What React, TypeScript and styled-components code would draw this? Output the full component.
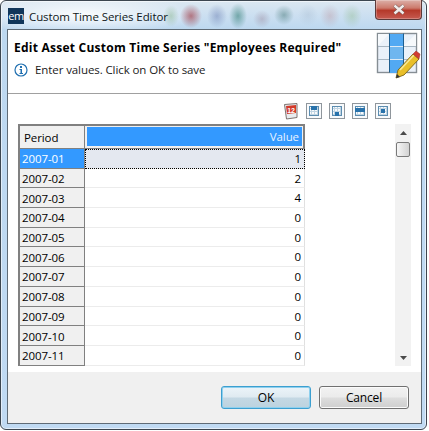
import styled, { createGlobalStyle } from 'styled-components';

const periods = [
  ['2007-01', '1'],
  ['2007-02', '2'],
  ['2007-03', '4'],
  ['2007-04', '0'],
  ['2007-05', '0'],
  ['2007-06', '0'],
  ['2007-07', '0'],
  ['2007-08', '0'],
  ['2007-09', '0'],
  ['2007-10', '0'],
  ['2007-11', '0'],
];

const GlobalStyle = createGlobalStyle`
  html, body {
    margin: 0;
    padding: 0;
    background: #ffffff;
    overflow: hidden;
  }
  body {
    font-family: 'Open Sans', 'Noto Sans', sans-serif;
    font-size: 11.5px;
    letter-spacing: -0.09px;
    color: #000000;
  }
`;

const Frame = styled.div`
  width: 427px;
  height: 430px;
  box-sizing: border-box;
  display: flex;
  flex-direction: column;
  padding: 0 4px 5px 6px;
  border: 1px solid #3c4650;
  border-radius: 6px;
  box-shadow: inset 0 0 0 1px rgba(255, 255, 255, 0.55);
  background:
    radial-gradient(ellipse 8px 11px at 170px 15px, rgba(120, 170, 120, 0.4), transparent),
    radial-gradient(ellipse 11px 12px at 190px 15px, rgba(160, 60, 70, 0.65), transparent),
    radial-gradient(ellipse 10px 12px at 216px 15px, rgba(110, 130, 180, 0.5), transparent),
    radial-gradient(ellipse 9px 13px at 237px 15px, rgba(40, 120, 110, 0.55), transparent),
    radial-gradient(ellipse 9px 9px at 261px 18px, rgba(150, 130, 150, 0.4), transparent),
    radial-gradient(ellipse 10px 10px at 283px 14px, rgba(70, 120, 120, 0.5), transparent),
    radial-gradient(ellipse 10px 11px at 307px 14px, rgba(170, 190, 210, 0.4), transparent),
    radial-gradient(ellipse 10px 12px at 329px 15px, rgba(190, 160, 170, 0.45), transparent),
    radial-gradient(ellipse 10px 12px at 351px 15px, rgba(150, 190, 150, 0.45), transparent),
    radial-gradient(ellipse 120px 20px at 80px 14px, rgba(255, 255, 255, 0.9), transparent),
    linear-gradient(180deg, #dbe7f1 0, #bdd8f0 28px, #c0daf3 100%);
`;

const TitleBar = styled.div`
  height: 28px;
  display: flex;
  align-items: center;
  gap: 5px;
  padding: 2px 0 0 1px;
  box-sizing: border-box;
  flex-shrink: 0;
  position: relative;
`;

const AppBadge = styled.div`
  width: 16px;
  height: 16px;
  background: #10365a;
  color: #ffffff;
  font-size: 11px;
  line-height: 15px;
  text-align: center;
  letter-spacing: -0.5px;
`;

const TitleText = styled.span`
  font-size: 11.5px;
  color: #101820;
`;

const CloseButton = styled.div`
  position: absolute;
  top: -1px;
  right: 0;
  width: 47px;
  height: 20px;
  box-sizing: border-box;
  border: 1px solid #5c3a3a;
  border-top: none;
  border-radius: 0 0 4px 4px;
  background: linear-gradient(180deg, #dcb0a8 0, #cc7a6c 42%, #b5392a 55%, #c65a50 100%);
  box-shadow: inset 0 0 0 1px rgba(255, 255, 255, 0.25);
  display: flex;
  align-items: center;
  justify-content: center;
`;

const Client = styled.div`
  flex: 1;
  display: flex;
  flex-direction: column;
  border: 1px solid #5f6b76;
  background: #ffffff;
  min-height: 0;
`;

const Header = styled.div`
  height: 64px;
  flex-shrink: 0;
  box-sizing: border-box;
  border-bottom: 1px solid #a0a0a0;
  padding: 8px 0 0 6px;
  display: flex;
  position: relative;
`;

const HeaderText = styled.div`
  display: flex;
  flex-direction: column;
  gap: 5px;
`;

const Heading = styled.div`
  font-weight: 700;
  font-size: 12px;
  letter-spacing: 0.24px;
  line-height: 19px;
  color: #000000;
`;

const Hint = styled.div`
  display: flex;
  align-items: center;
  gap: 7px;
  line-height: 16px;
  color: #1a1a1a;
`;

const HeaderArt = styled.svg`
  position: absolute;
  right: 0;
  top: 2px;
`;

const Content = styled.div`
  flex: 1;
  min-height: 0;
  display: flex;
  flex-direction: column;
  padding: 6px 10px 0 10px;
`;

const Toolbar = styled.div`
  height: 24px;
  box-sizing: border-box;
  padding-top: 3px;
  display: flex;
  justify-content: flex-end;
  align-items: flex-start;
  gap: 7px;
  margin-right: 20px;
`;

const TableArea = styled.div`
  flex: 1;
  min-height: 0;
  display: flex;
  justify-content: space-between;
`;

const Grid = styled.div`
  width: 287px;
  height: 242px;
  overflow: hidden;
  border-left: 2px solid #808080;
  border-top: 2px solid #808080;
  box-sizing: border-box;
`;

const GridRow = styled.div<{ $head?: boolean }>`
  display: flex;
  height: ${(p) => (p.$head ? '23px' : '19.7px')};
  box-sizing: border-box;
`;

const PeriodCell = styled.div<{ $head?: boolean; $selected?: boolean }>`
  width: 65px;
  flex-shrink: 0;
  box-sizing: border-box;
  padding: 1px 0 0 ${(p) => (p.$head ? '4px' : '2px')};
  display: flex;
  align-items: center;
  background: ${(p) => (p.$selected ? '#3399ff' : '#f0f0f0')};
  color: ${(p) => (p.$selected ? '#ffffff' : '#000000')};
  border-right: 1px solid #808080;
  border-bottom: 1px solid #808080;
`;

const ValueHead = styled.div`
  flex: 1;
  background: #f0f0f0;
  border-right: 2px solid #808080;
  border-bottom: 1px solid #808080;
  padding: 1px 1px 2px 2px;
  box-sizing: border-box;
  display: flex;
`;

const ValueHeadFill = styled.div`
  flex: 1;
  background: #3399ff;
  color: #e8f3ff;
  text-align: right;
  line-height: 19px;
  padding-right: 3px;
`;

const ValueCell = styled.div<{ $selected?: boolean }>`
  flex: 1;
  box-sizing: border-box;
  text-align: right;
  line-height: 19px;
  padding-right: 3px;
  background: ${(p) => (p.$selected ? '#e4e8f0' : '#ffffff')};
  border-bottom: 1px solid #ececec;
  border-right: 1px solid #e0e0e0;
  ${(p) => (p.$selected ? 'outline: 1px dotted #000000; outline-offset: -1px;' : '')}
`;

const ScrollBar = styled.div`
  width: 16px;
  height: 242px;
  background: #f2f2f2;
  display: flex;
  flex-direction: column;
`;

const ScrollArrow = styled.div<{ $top?: boolean }>`
  height: ${(p) => (p.$top ? '18px' : '17px')};
  display: flex;
  align-items: center;
  justify-content: center;
`;

const ScrollThumb = styled.div`
  height: 15px;
  margin: 0 1px;
  box-sizing: border-box;
  border: 1px solid #7a7a7a;
  border-radius: 2px;
  background: linear-gradient(90deg, #f6f6f6, #d2d2d2);
`;

const ScrollTrack = styled.div`
  flex: 1;
`;

const Footer = styled.div`
  height: 51px;
  flex-shrink: 0;
  background: #f0f0f0;
  display: flex;
  justify-content: flex-end;
  gap: 8px;
  padding: 14px 12px 0 0;
  box-sizing: border-box;
`;

const DialogButton = styled.button<{ $primary?: boolean }>`
  width: 90px;
  height: 23px;
  box-sizing: border-box;
  font-family: inherit;
  font-size: 12px;
  letter-spacing: -0.15px;
  padding: 0;
  color: #000000;
  border-radius: 3px;
  border: 1px solid ${(p) => (p.$primary ? '#3c9fd0' : '#707070')};
  background: ${(p) =>
    p.$primary
      ? 'linear-gradient(180deg, #ecf4f9 0, #dfeaf1 48%, #c4d8e4 52%, #bcd3df 100%)'
      : 'linear-gradient(180deg, #f2f2f2 0, #ebebeb 48%, #dddddd 52%, #cfcfcf 100%)'};
  box-shadow: inset 0 0 0 1px ${(p) => (p.$primary ? '#8fd0ee' : '#fbfbfb')};
`;

function InfoIcon() {
  return (
    <svg width="14" height="14" viewBox="0 0 14 14">
      <circle cx="7" cy="7" r="6" fill="#ffffff" stroke="#1f6fb0" strokeWidth="1.2" />
      <rect x="6" y="3" width="2" height="2" fill="#1f6fb0" />
      <path d="M5.5 6H8v4h1v1H5.5v-1h1V7h-1z" fill="#1f6fb0" />
    </svg>
  );
}

function TableEditArt() {
  const rows = [0, 1, 2];
  return (
    <HeaderArt width="46" height="50" viewBox="0 0 46 50">
      <rect x="2.5" y="1.5" width="39" height="39" fill="#eaf1f9" stroke="#868e94" strokeWidth="1.4" />
      <path d="M3 2h11L3 14zM28 14l13-12v12z" fill="#f6f9fc" />
      {rows.map((r) => (
        <rect key={r} x="15" y={2 + r * 13} width="13" height="13" fill={r === 1 ? '#6fb6ef' : '#52a9f3'} />
      ))}
      <path d="M14.5 1.5v39M28.5 1.5v39" stroke="#1f5f8f" fill="none" />
      <path d="M3 14.5h11M29 14.5h12M3 27.5h11M29 27.5h12" stroke="#a8b6c2" fill="none" />
      <path d="M15 14.5h13M15 27.5h13" stroke="#dceaf6" fill="none" />
      <path d="M21 46l2-8 15-16 6 5-15 16z" fill="#e9bf2a" stroke="#7c6414" strokeWidth="0.9" />
      <path d="M25 38l14-15" stroke="#f8e896" strokeWidth="1.6" fill="none" />
      <path d="M38 22l3-3 4 3-1 5z" fill="#d23c32" stroke="#9c3028" strokeWidth="0.5" />
      <path d="M21 46l1-4 3 3z" fill="#33353a" />
    </HeaderArt>
  );
}

function CalendarTool() {
  return (
    <svg width="15" height="17" viewBox="0 0 15 17">
      <path d="M0.5 1.5l12.5-1 0 14-10.5 1.5z" fill="#e8ecef" stroke="#7d7370" />
      <path d="M2 3l10-1v8l-9 1z" fill="#d23a2a" />
      <text x="7" y="9.5" fontSize="7" fontWeight="700" textAnchor="middle" fill="#ffffff" fontFamily="'Liberation Sans', sans-serif">
        12
      </text>
    </svg>
  );
}

function GridTool({ mark }: { mark: string }) {
  return (
    <svg width="16" height="16" viewBox="0 0 16 16">
      <rect x="0.5" y="0.5" width="15" height="15" fill="#f8fafc" stroke="#8f969c" />
      <path d="M3 5.5h10M3 8.5h10M3 11.5h10M5.5 3v10M8.5 3v10M11.5 3v10" stroke="#c0d4e2" fill="none" />
      <path d="M3.5 3v10M12.5 3v10M3 3.5h10M3 12.5h10" stroke="#5c8db0" fill="none" />
      <path d={mark} fill="#2872ab" />
    </svg>
  );
}

export default function App() {
  return (
    <>
      <GlobalStyle />
      <Frame>
        <TitleBar>
          <AppBadge>em</AppBadge>
          <TitleText>Custom Time Series Editor</TitleText>
          <CloseButton>
            <svg width="14" height="11" viewBox="0 0 14 11">
              <path d="M2.5 1.5l9 8M11.5 1.5l-9 8" stroke="#6d5a58" strokeWidth="3.6" fill="none" />
              <path d="M2.5 1.5l9 8M11.5 1.5l-9 8" stroke="#f2ecea" strokeWidth="2.4" fill="none" />
            </svg>
          </CloseButton>
        </TitleBar>
        <Client>
          <Header>
            <HeaderText>
              <Heading>Edit Asset Custom Time Series "Employees Required"</Heading>
              <Hint>
                <InfoIcon />
                Enter values. Click on OK to save
              </Hint>
            </HeaderText>
            <TableEditArt />
          </Header>
          <Content>
            <Toolbar>
              <CalendarTool />
              <GridTool mark="M5 3h6v4H5z" />
              <GridTool mark="M6 9h4v4H6z" />
              <GridTool mark="M3 5h10v4H3z" />
              <GridTool mark="M6 6h4v4H6z" />
            </Toolbar>
            <TableArea>
              <Grid>
                <GridRow $head>
                  <PeriodCell $head>Period</PeriodCell>
                  <ValueHead>
                    <ValueHeadFill>Value</ValueHeadFill>
                  </ValueHead>
                </GridRow>
                {periods.map(([period, value], i) => (
                  <GridRow key={period}>
                    <PeriodCell $selected={i === 0}>{period}</PeriodCell>
                    <ValueCell $selected={i === 0}>{value}</ValueCell>
                  </GridRow>
                ))}
              </Grid>
              <ScrollBar>
                <ScrollArrow $top>
                  <svg width="7" height="4" viewBox="0 0 7 4">
                    <path d="M3.5 0L7 4H0z" fill="#4a4a4a" />
                  </svg>
                </ScrollArrow>
                <ScrollThumb />
                <ScrollTrack />
                <ScrollArrow>
                  <svg width="7" height="4" viewBox="0 0 7 4">
                    <path d="M0 0h7L3.5 4z" fill="#4a4a4a" />
                  </svg>
                </ScrollArrow>
              </ScrollBar>
            </TableArea>
          </Content>
          <Footer>
            <DialogButton $primary>OK</DialogButton>
            <DialogButton>Cancel</DialogButton>
          </Footer>
        </Client>
      </Frame>
    </>
  );
}
